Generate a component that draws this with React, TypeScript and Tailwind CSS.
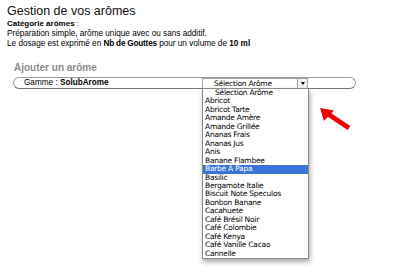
import React from 'react';

const aromes = [
  'Abricot',
  'Abricot Tarte',
  'Amande Amère',
  'Amande Grillée',
  'Ananas Frais',
  'Ananas Jus',
  'Anis',
  'Banane Flambee',
  'Barbe A Papa',
  'Basilic',
  'Bergamote Italie',
  'Biscuit Note Speculos',
  'Bonbon Banane',
  'Cacahuete',
  'Café Brésil Noir',
  'Café Colombie',
  'Café Kenya',
  'Café Vanille Cacao',
  'Cannelle',
];

export default function App() {
  return (
    <div className="relative w-[408px] h-[273px] bg-white overflow-hidden text-black font-['Liberation_Sans',Arial,sans-serif]">
      <div className="pl-[7px] pt-[4px]">
        <h1 className="text-[12.5px] leading-[15px] text-[#111]">Gestion de vos arômes</h1>
        <p className="text-[8px] leading-[10px]"><b>Catégorie arômes</b> :</p>
        <p className="text-[8.2px] leading-[10px]">Préparation simple, arôme unique avec ou sans additif.</p>
        <p className="text-[8.2px] leading-[10px]">
          Le dosage est exprimé en <b className="tracking-[-0.2px]">Nb de Gouttes</b> pour un volume de <b>10 ml</b>
        </p>
      </div>

      <div className="pl-[13px] pt-[13px]">
        <h2 className="pl-[1px] text-[10px] leading-[12px] font-bold text-[#8c8c8c]">Ajouter un arôme</h2>
        <div className="mt-[3px] w-[343px] h-[12px] rounded-full border border-[#9c9c9c] border-b-[#777] bg-white flex items-start">
          <span className="pl-[10px] w-[188px] text-[8.2px] leading-[10px]">
            Gamme : <b>SolubArome</b>
          </span>
          <div className="relative w-[106px] h-[11px]">
            <div className="flex h-full border border-[#a5a5a5] bg-white">
              <div className="flex-1 pl-[11px] text-[7.5px] leading-[9px] font-['DejaVu_Sans',sans-serif] tracking-[-0.25px]">Sélection Arôme</div>
              <div className="w-[10px] border-l border-[#a5a5a5] bg-[#f2f2f2] flex items-center justify-center">
                <span className="block w-0 h-0 border-l-[2px] border-r-[2px] border-t-[3px] border-l-transparent border-r-transparent border-t-black" />
              </div>
            </div>
            <div className="absolute left-0 top-[10px] w-[107px] bg-white border border-[#8c8c8c] shadow-[1px_3px_5px_rgba(0,0,0,0.35)] font-['DejaVu_Sans',sans-serif] text-[7.5px] leading-[8.45px] tracking-[-0.25px] z-10">
              <div className="pl-[12px]">Sélection Arôme</div>
              {aromes.map((a) => (
                <div
                  key={a}
                  className={a === 'Barbe A Papa' ? 'pl-[2px] bg-[#3a74d6] text-white' : 'pl-[2px]'}
                >
                  {a}
                </div>
              ))}
            </div>
          </div>
        </div>
      </div>

      <svg className="absolute left-[318px] top-[106px]" width="34" height="26" viewBox="0 0 34 26">
        <line x1="10" y1="8" x2="31" y2="22" stroke="#f00000" strokeWidth="5" />
        <polygon points="2,2 16,4.5 6,15" fill="#f00000" />
      </svg>
    </div>
  );
}
